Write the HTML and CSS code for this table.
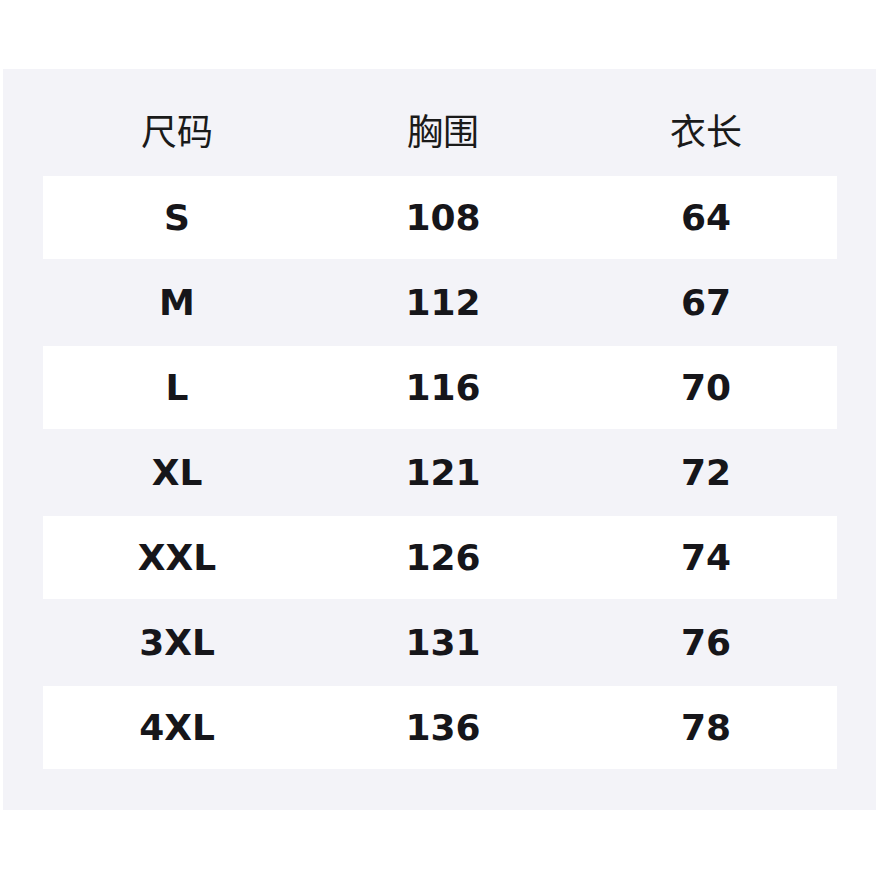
FILE: index.html
```html
<!DOCTYPE html>
<html lang="zh">
<head>
<meta charset="utf-8">
<title>尺码表</title>
<link rel="stylesheet" href="styles.css">
</head>
<body>
<div class="page">
  <div class="panel">
    <div class="row head">
      <div class="cell">尺码</div>
      <div class="cell">胸围</div>
      <div class="cell">衣长</div>
    </div>
    <div class="row odd"><div class="cell">S</div><div class="cell">108</div><div class="cell">64</div></div>
    <div class="row"><div class="cell">M</div><div class="cell">112</div><div class="cell">67</div></div>
    <div class="row odd"><div class="cell">L</div><div class="cell">116</div><div class="cell">70</div></div>
    <div class="row"><div class="cell">XL</div><div class="cell">121</div><div class="cell">72</div></div>
    <div class="row odd"><div class="cell">XXL</div><div class="cell">126</div><div class="cell">74</div></div>
    <div class="row"><div class="cell">3XL</div><div class="cell">131</div><div class="cell">76</div></div>
    <div class="row odd"><div class="cell">4XL</div><div class="cell">136</div><div class="cell">78</div></div>
  </div>
</div>
</body>
</html>
```
FILE: styles.css
```css
html, body {
  margin: 0;
  padding: 0;
  background: #ffffff;
}
.page {
  padding: 69px 4px 0 3px;
}
.panel {
  background: #f3f3f8;
  padding: 21px 39px 40px 40px;
  height: 680px;
}
.row {
  display: grid;
  grid-template-columns: 268px 264px 262px;
  height: 85px;
  box-sizing: border-box;
  border-top: 1px solid transparent;
  border-bottom: 1px solid transparent;
  background-clip: padding-box;
  font-family: "DejaVu Sans", sans-serif;
  font-weight: bold;
  font-size: 36px;
  color: #16161a;
}
.row.odd {
  background-color: #ffffff;
}
.cell {
  display: flex;
  align-items: center;
  justify-content: center;
}
.row.head {
  font-family: "Noto Sans CJK SC", "Noto Sans", sans-serif;
  font-weight: normal;
  font-size: 36px;
  color: #1a1a1a;
  padding-bottom: 7px;
}
```
